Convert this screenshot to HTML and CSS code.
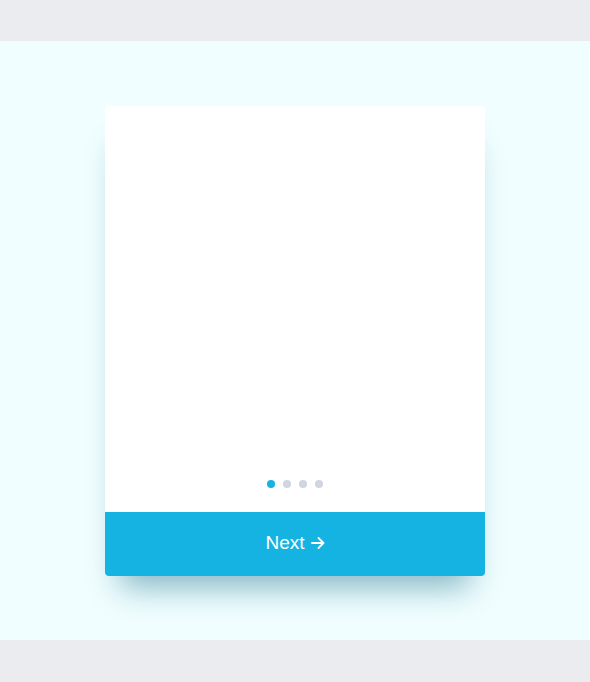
FILE: index.html
```html
<!DOCTYPE html>
<html>
<head>
<meta charset="utf-8">
<link rel="stylesheet" href="styles.css">
</head>
<body>
<div class="top"></div>
<main class="stage">
  <div class="card">
    <div class="slides">
      <div class="dots">
        <span class="dot active"></span>
        <span class="dot"></span>
        <span class="dot"></span>
        <span class="dot"></span>
      </div>
    </div>
    <button class="next"><span>Next</span><svg class="arrow" width="14" height="12" viewBox="0 0 14 12"><path d="M1 6H12.5M7.5 1L12.5 6L7.5 11" fill="none" stroke="#fff" stroke-width="1.8" stroke-linecap="round" stroke-linejoin="round"/></svg></button>
  </div>
</main>
<div class="bottom"></div>
</body>
</html>
```
FILE: styles.css
```css
html, body { margin: 0; padding: 0; }
body { background: #ebecf0; font-family: "Liberation Sans", Arial, sans-serif; }
.top { height: 41px; background: #ebecf0; }
.bottom { height: 42px; background: #ebecf0; }
.stage {
  height: 599px;
  background: #f0feff;
  display: flex;
  justify-content: center;
  padding-top: 65px;
  box-sizing: border-box;
}
.card {
  width: 380px;
  height: 470px;
  background: #fff;
  border-radius: 4px;
  display: flex;
  flex-direction: column;
  box-shadow: 0 26px 30px -15px rgba(0, 95, 125, 0.45);
  overflow: hidden;
}
.slides {
  flex: 1;
  display: flex;
  align-items: flex-end;
  justify-content: center;
  padding-bottom: 24px;
}
.dots { display: flex; gap: 8px; }
.dot { width: 8px; height: 8px; border-radius: 50%; background: #d1d5e0; }
.dot.active { background: #15b2e2; }
.next {
  height: 64px;
  border: 0;
  background: #15b3e2;
  color: #fff;
  font-family: "Liberation Sans", Arial, sans-serif;
  font-size: 19px;
  font-weight: 400;
  display: flex;
  align-items: center;
  justify-content: center;
  gap: 6px;
  padding: 0 0 2px;
}
.arrow { display: block; }
```
